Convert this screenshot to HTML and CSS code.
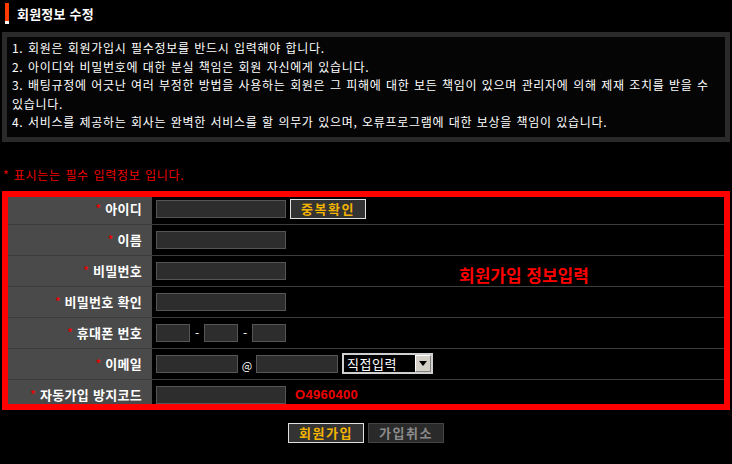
FILE: index.html
```html
<!DOCTYPE html>
<html lang="ko">
<head>
<meta charset="utf-8">
<title>회원정보 수정</title>
<link rel="stylesheet" href="styles.css">
</head>
<body>
<div class="page">
  <h1 class="title"><span class="bar"></span>회원정보 수정</h1>

  <div class="notice">
    <p>1. 회원은 회원가입시 필수정보를 반드시 입력해야 합니다.</p>
    <p>2. 아이디와 비밀번호에 대한 분실 책임은 회원 자신에게 있습니다.</p>
    <p>3. 배팅규정에 어긋난 여러 부정한 방법을 사용하는 회원은 그 피해에 대한 보든 책임이 있으며 관리자에 의해 제재 조치를 받을 수<br>있습니다.</p>
    <p>4. 서비스를 제공하는 회사는 완벽한 서비스를 할 의무가 있으며, 오류프로그램에 대한 보상을 책임이 있습니다.</p>
  </div>

  <p class="req">* 표시는는 필수 입력정보 입니다.</p>

  <div class="frame">
    <div class="rows">
      <div class="row">
        <div class="label"><span class="star">*</span>아이디</div>
        <div class="value"><input class="field" type="text"><button class="btn btn-check" type="button">중복확인</button></div>
      </div>
      <div class="row">
        <div class="label"><span class="star">*</span>이름</div>
        <div class="value"><input class="field" type="text"></div>
      </div>
      <div class="row">
        <div class="label"><span class="star">*</span>비밀번호</div>
        <div class="value"><input class="field" type="password"></div>
      </div>
      <div class="row">
        <div class="label"><span class="star">*</span>비밀번호 확인</div>
        <div class="value"><input class="field" type="password"></div>
      </div>
      <div class="row">
        <div class="label"><span class="star">*</span>휴대폰 번호</div>
        <div class="value"><input class="field short" type="text"><span class="sep">-</span><input class="field short" type="text"><span class="sep">-</span><input class="field short" type="text"></div>
      </div>
      <div class="row">
        <div class="label"><span class="star">*</span>이메일</div>
        <div class="value"><input class="field mid" type="text"><span class="at">@</span><input class="field mid" type="text"><div class="select"><span class="select-text">직접입력</span><span class="select-arrow"><svg width="8" height="5" viewBox="0 0 8 5"><path d="M0 0H8L4 5Z" fill="#000"/></svg></span></div></div>
      </div>
      <div class="row">
        <div class="label"><span class="star">*</span>자동가입 방지코드</div>
        <div class="value"><input class="field" type="text"><span class="code">O4960400</span></div>
      </div>
    </div>
    <div class="overlay">회원가입 정보입력</div>
  </div>

  <div class="actions">
    <button class="btn btn-submit" type="button">회원가입</button>
    <button class="btn btn-cancel" type="button">가입취소</button>
  </div>
</div>
</body>
</html>
```

FILE: styles.css
```css
html, body {
  margin: 0;
  padding: 0;
  background: #000;
}

body {
  font-family: "Noto Sans CJK KR", "Noto Sans", sans-serif;
  font-size: 12px;
  color: #fff;
}

.page {
  padding: 0 2px;
}

.title {
  display: flex;
  align-items: center;
  margin: 3px 0 8px 0;
  height: 21px;
  font-size: 13px;
  font-weight: bold;
  letter-spacing: 0.2px;
  color: #fff;
}

.bar {
  width: 4px;
  height: 18px;
  margin: 0 8px 0 3px;
  background: #ff3a00;
  border-bottom: 3px solid #fff;
}

.notice {
  border: 5px solid #2a2a2a;
  background: #050505;
  padding: 2px 5px 5px;
  line-height: 18.5px;
  letter-spacing: 0.7px;
  word-spacing: 0.5px;
  color: #fff;
}

.notice p {
  margin: 0;
  white-space: nowrap;
}

.req {
  margin: 24px 0 7px 1px;
  line-height: 18px;
  letter-spacing: 0.7px;
  word-spacing: 0.5px;
  color: #ee0000;
}

.frame {
  position: relative;
  border: 6px solid #ff0000;
  height: 207px;
  overflow: hidden;
}

.rows {
  margin-top: -3px;
}

.row {
  display: flex;
  height: 30px;
  border-bottom: 1px solid #3c3c3c;
}

.label {
  width: 144px;
  flex: none;
  box-sizing: border-box;
  background: #4a4a4a;
  display: flex;
  justify-content: flex-end;
  align-items: center;
  padding-right: 10px;
  font-size: 13px;
  font-weight: bold;
  letter-spacing: 0.3px;
  color: #fff;
}

.star {
  color: #ee0000;
  font-size: 10px;
  margin-right: 4px;
  position: relative;
  top: -1px;
}

.value {
  flex: 1;
  display: flex;
  align-items: center;
  padding-left: 4px;
}

.field {
  box-sizing: border-box;
  width: 130px;
  height: 18px;
  margin: 0;
  padding: 0 2px;
  background: #2d2d2d;
  border: 1px solid #555;
  color: #fff;
  outline: none;
}

.field.short {
  width: 34px;
}

.field.mid {
  width: 82px;
}

.sep {
  width: 14px;
  text-align: center;
  color: #fff;
}

.at {
  width: 18px;
  text-align: center;
  font-size: 11px;
  color: #fff;
  padding-top: 2px;
}

.select {
  box-sizing: border-box;
  width: 91px;
  height: 21px;
  margin-left: 4px;
  border: 2px solid #d0d0d0;
  background: #000;
  display: flex;
  align-items: center;
  justify-content: space-between;
}

.select-text {
  padding-left: 3px;
  font-size: 13px;
  letter-spacing: 0.5px;
  color: #fff;
  line-height: 17px;
}

.select-arrow {
  box-sizing: border-box;
  width: 16px;
  height: 17px;
  background: #d4d0c8;
  border-top: 1px solid #fff;
  border-left: 1px solid #fff;
  border-right: 1px solid #808080;
  border-bottom: 1px solid #808080;
  display: flex;
  align-items: center;
  justify-content: center;
}

.code {
  margin-left: 9px;
  font-family: "Liberation Sans", Arial, sans-serif;
  font-weight: bold;
  font-size: 13px;
  letter-spacing: 0.3px;
  color: #ee0000;
}

.overlay {
  position: absolute;
  left: 451px;
  top: 67px;
  font-size: 17px;
  font-weight: bold;
  letter-spacing: 0;
  line-height: 21px;
  color: #ff0000;
}

.btn {
  box-sizing: border-box;
  width: 76px;
  height: 20px;
  padding: 0;
  margin: 0;
  font-family: "Noto Sans CJK KR", "Noto Sans", sans-serif;
  font-size: 13px;
  font-weight: bold;
  letter-spacing: 1.5px;
  line-height: 18px;
  cursor: pointer;
}

.btn-check,
.btn-submit {
  background: #333;
  border: 1px solid #e0e0e0;
  color: #f5b400;
}

.btn-check {
  margin-left: 4px;
}

.btn-cancel {
  background: #2a2a2a;
  border: 1px solid #444;
  color: #8c8c8c;
}

.actions {
  display: flex;
  justify-content: center;
  gap: 4px;
  margin-top: 13px;
}
```
